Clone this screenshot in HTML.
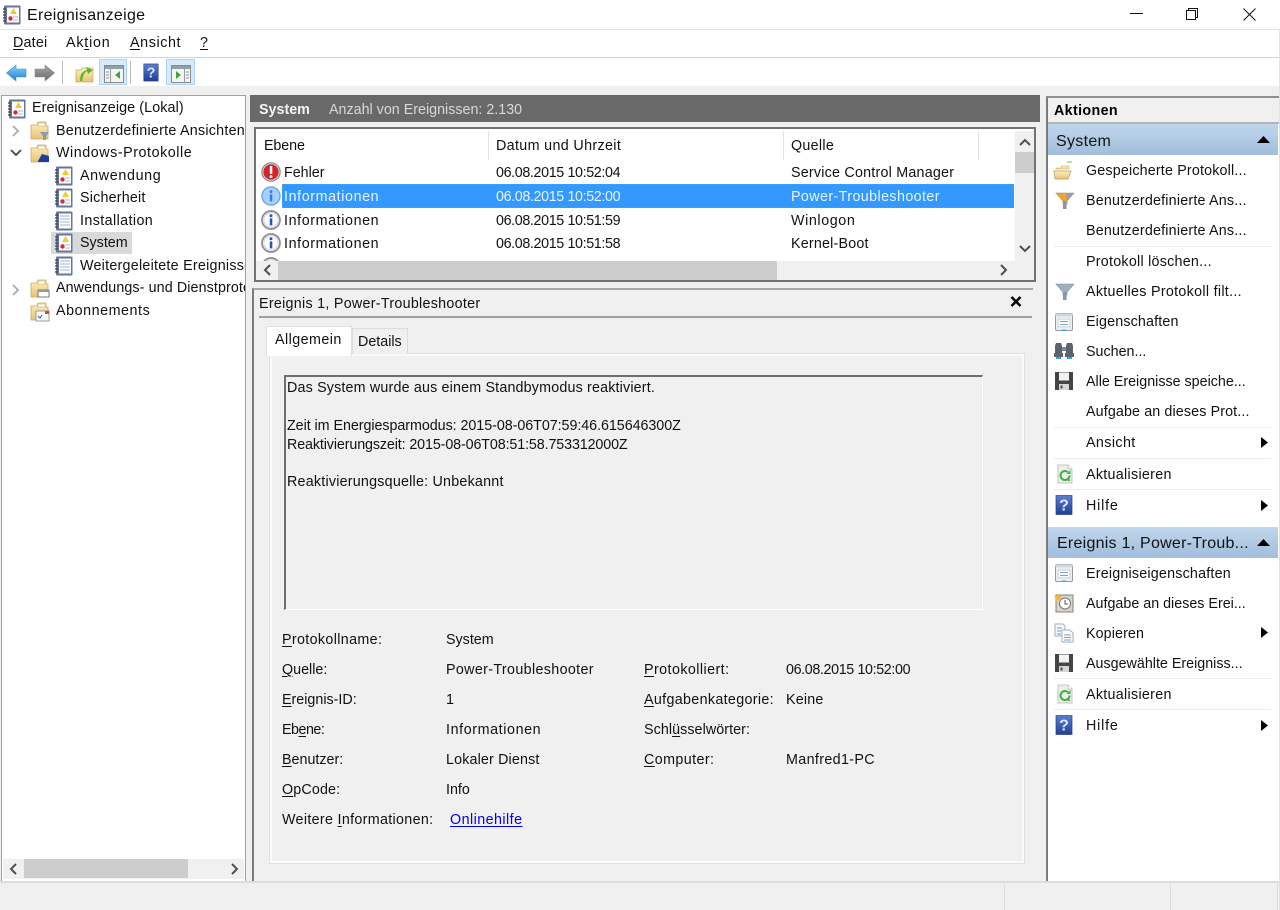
<!DOCTYPE html>
<html lang="de"><head><meta charset="utf-8"><title>Ereignisanzeige</title>
<style>
html,body{margin:0;padding:0;width:1280px;height:910px;overflow:hidden;background:#f0f0f0}
body{position:relative;font-family:"Liberation Sans",sans-serif;font-size:14.3px;color:#111}
.b{position:absolute}
.t{position:absolute;white-space:nowrap;line-height:20px;height:20px;margin-top:1px}
.d{letter-spacing:-.37px}
svg.i{position:absolute;overflow:visible}
u{text-decoration:underline;text-underline-offset:2px}
</style></head><body>
<svg width="0" height="0" style="position:absolute"><defs>
<linearGradient id="gb" x1="0" y1="0" x2="0" y2="1"><stop offset="0" stop-color="#8fd0fa"/><stop offset="1" stop-color="#1c7fd0"/></linearGradient>
<linearGradient id="gg" x1="0" y1="0" x2="0" y2="1"><stop offset="0" stop-color="#a8a8a8"/><stop offset="1" stop-color="#6a6a6a"/></linearGradient>
<linearGradient id="gf" x1="0" y1="0" x2="0" y2="1"><stop offset="0" stop-color="#fdf0c0"/><stop offset="1" stop-color="#e8c274"/></linearGradient>
<linearGradient id="gq" x1="0" y1="0" x2="0" y2="1"><stop offset="0" stop-color="#5a7fd0"/><stop offset="1" stop-color="#1f3f98"/></linearGradient>
<symbol id="log" viewBox="0 0 18 20"><rect x="1" y="0.500" width="16.500" height="19" fill="#64769a" rx="1"/><rect x="4" y="2.500" width="12" height="15" fill="#fff"/><path d="M0 4h3M0 7h3M0 10h3M0 13h3M0 16h3" stroke="#444" stroke-width="1.200"/><path d="M10.500 3l3.500 6h-7z" fill="#f5c92c"/><circle cx="7.500" cy="13.500" r="2.200" fill="#cf2d36"/><path d="M10 12h5M10 15h5" stroke="#a8b8d0"/></symbol>
<symbol id="logp" viewBox="0 0 18 20"><rect x="1" y="0.500" width="16.500" height="19" fill="#64769a" rx="1"/><rect x="4" y="2.500" width="12" height="15" fill="#fff"/><path d="M0 4h3M0 7h3M0 10h3M0 13h3M0 16h3" stroke="#444" stroke-width="1.200"/><path d="M5 5h10M5 8h10M5 11h10M5 14h10" stroke="#9cb4d8"/></symbol>
<symbol id="fold" viewBox="0 0 20 20"><path d="M1 5h6l1-3h8v4h2v13H1z" fill="url(#gf)" stroke="#cda860" stroke-width=".8"/><rect x="8" y="3" width="7" height="3" fill="#fff" stroke="#c8a860" stroke-width=".5"/></symbol>
<symbol id="info" viewBox="0 0 20 20"><circle cx="10" cy="10" r="9" fill="#fff" stroke="#8c8c8c" stroke-width="1.700"/><circle cx="10" cy="10" r="7.200" fill="#fbfbfd" stroke="#d0d0d8"/><rect x="8.800" y="8.400" width="2.500" height="7" fill="#2456b8"/><circle cx="10" cy="5.800" r="1.500" fill="#2456b8"/></symbol>
<symbol id="err" viewBox="0 0 20 20"><circle cx="10" cy="10" r="9.200" fill="#d5d0d0" stroke="#8c8c8c" stroke-width="1.200"/><circle cx="10" cy="10" r="7.600" fill="#d5222c"/><rect x="8.800" y="4" width="2.500" height="8" fill="#fff"/><circle cx="10" cy="14.600" r="1.500" fill="#fff"/></symbol>
<symbol id="props" viewBox="0 0 20 20"><rect x="1.500" y="1.500" width="17" height="17" rx="1.500" fill="#eef1f4" stroke="#9a9a9a"/><rect x="1.500" y="1.500" width="17" height="3" fill="#d4d8dc"/><rect x="4" y="7" width="12" height="8" fill="#fff" stroke="#b8c0c8" stroke-width=".7"/><path d="M6 9.500h8M6 12.500h8" stroke="#7aa8d0"/><rect x="8" y="17.500" width="4" height="1.500" fill="#3ab0e0"/></symbol>
<symbol id="save" viewBox="0 0 20 20"><path d="M1 1h18v18H1z" fill="#444"/><rect x="5" y="1.500" width="10" height="8" fill="#f2f2f2"/><rect x="5" y="13" width="10" height="6" fill="#d6d6d6"/><rect x="6.500" y="14.500" width="2" height="3" fill="#444"/></symbol>
<symbol id="refr" viewBox="0 0 20 20"><path d="M3 1h10l4 4v14H3z" fill="#eeeeee" stroke="#c4c4c4"/><path d="M13 1v4h4" fill="#fff" stroke="#c4c4c4"/><path d="M14.500 11.500a4.500 4.500 0 1 1-1.600-3.400" fill="none" stroke="#3cb43c" stroke-width="2"/><path d="M15.500 6v4h-4z" fill="#3cb43c"/><path d="M11 15l4 1.500" stroke="#3cb43c" stroke-width="1.500"/></symbol>
<symbol id="help" viewBox="0 0 20 20"><rect x="2" y="0.500" width="16" height="19" fill="url(#gq)" stroke="#2a3f80" stroke-width=".7"/><text x="10" y="15.500" text-anchor="middle" font-family="Liberation Sans" font-weight="bold" font-size="16" fill="#dbe6ff">?</text></symbol>
<symbol id="filt" viewBox="0 0 20 20"><path d="M1 2h18l-7 8v3H8v-3z" fill="#9eb0c0" stroke="#7f8f9f" stroke-width=".6"/><rect x="8" y="10" width="3.600" height="8" fill="#8895a3"/></symbol>
<symbol id="filty" viewBox="0 0 20 20"><path d="M1 2h18l-7 8v3H8v-3z" fill="#f5a623" stroke="#a09070" stroke-width=".6"/><path d="M11 2h8l-7 8z" fill="#8fa0b0"/><rect x="8" y="10" width="3.600" height="8" fill="#8895a3"/></symbol>
<symbol id="open" viewBox="0 0 20 20"><path d="M3 7h5l1-2h7v3H3z" fill="#f5e3a8" stroke="#c8a860" stroke-width=".6"/><path d="M1 10h14l3 0-3 8H2z" fill="url(#gf)" stroke="#b8985a" stroke-width=".7"/><path d="M14 1h5" stroke="#55d055"/></symbol>
<symbol id="bino" viewBox="0 0 22 20"><path d="M2 5l1-3h5l1 3v8H2zM13 5l1-3h5l1 3v8h-7z" fill="#59626e"/><rect x="9" y="6" width="4" height="4" fill="#7d8692"/><rect x="1" y="12" width="9" height="4" fill="#5b6672"/><rect x="12" y="12" width="9" height="4" fill="#5b6672"/><path d="M3 17h5M14 17h5" stroke="#34a0e6" stroke-width="2"/></symbol>
<symbol id="clock" viewBox="0 0 20 20"><rect x="2" y="2" width="17" height="17" fill="#d8d2c8" stroke="#8a8276"/><circle cx="11" cy="10.500" r="5.500" fill="#fff" stroke="#777"/><path d="M11 7v4h3" fill="none" stroke="#555"/><path d="M4 0.500l1.300 2.600 2.700.4-2 2 .5 2.800L4 6.600 1.500 8l.5-2.800-2-2 2.700-.4z" fill="#f5b830"/></symbol>
<symbol id="copy" viewBox="0 0 20 20"><path d="M1 1h8l2 2v10H1z" fill="#f6f8fb" stroke="#a6aeb8"/><path d="M8 7h8l3 3v9H8z" fill="#fff" stroke="#a6aeb8"/><path d="M3 5h5M3 8h4M3 11h4M10 12h7M10 14.500h7M10 17h7" stroke="#6fa0d0"/></symbol>
<symbol id="pane" viewBox="0 0 20 18"><rect x="0.500" y="0.500" width="19" height="17" fill="#f4f4f4" stroke="#8a8a8a"/><rect x="1" y="1" width="18" height="3" fill="#90a0a8"/><path d="M6.500 4v13" stroke="#9a9a9a"/><path d="M2 7h3M2 10h3M2 13h3" stroke="#7a9ab8"/></symbol>
</defs></svg>

<!-- title bar -->
<div class="b" style="left:0;top:0;width:1280px;height:29px;background:#fff"></div>
<svg class="i" style="left:3px;top:5px" width="18" height="20"><use href="#log"/></svg>
<div class="t" style="left:27px;top:5px;font-size:16px;letter-spacing:.3px">Ereignisanzeige</div>
<svg class="i" style="left:1130px;top:13px" width="14" height="1"><rect width="13" height="1" fill="#111"/></svg>
<svg class="i" style="left:1186px;top:8px" width="12" height="12"><path d="M.5 2.500h9v9h-9zM2.500 2.500v-2h9v9h-2" fill="none" stroke="#111"/></svg>
<svg class="i" style="left:1243px;top:8px" width="13" height="13"><path d="M.5.500l12 12M12.500.500l-12 12" stroke="#111" fill="none"/></svg>
<!-- menu -->
<div class="b" style="left:0;top:29px;width:1280px;background:#fff;border-top:1px solid #e2e2e2;border-bottom:1px solid #d4d4d4;box-sizing:border-box;height:29px"></div>
<div class="t" style="left:13px;top:32px;letter-spacing:.2px"><u>D</u>atei</div>
<div class="t" style="left:66px;top:32px;letter-spacing:.8px">Ak<u>t</u>ion</div>
<div class="t" style="left:130px;top:32px;letter-spacing:.6px"><u>A</u>nsicht</div>
<div class="t" style="left:200px;top:32px"><u>?</u></div>
<!-- toolbar -->
<div class="b" style="left:0;top:58px;width:1280px;height:28px;background:#fff"></div>
<svg class="i" style="left:6px;top:64px" width="21" height="18"><path d="M.5 9L10 1v4h10v8H10v4z" fill="url(#gb)" stroke="#3a90d8" stroke-width=".6"/></svg>
<svg class="i" style="left:34px;top:64px" width="21" height="18"><path d="M20.500 9L11 1v4H1v8h10v4z" fill="url(#gg)" stroke="#888" stroke-width=".6"/></svg>
<div class="b" style="left:62px;top:61px;width:1px;height:23px;background:#b8b8b8"></div>
<svg class="i" style="left:75px;top:64px" width="19" height="19"><path d="M1 6h5l1-2h11v14H1z" fill="url(#gf)" stroke="#c8a860" stroke-width=".7"/><path d="M5 17c0-6 2-10 7-11l-1-3 7 3-5 4-1-3c-2 1-4 4-5 10z" fill="#58b830"/></svg>
<div class="b" style="left:99px;top:59px;width:28px;height:26px;background:#d6eafb;border:1px solid #a8d4f8;box-sizing:border-box"></div>
<svg class="i" style="left:104px;top:65px" width="20" height="18"><use href="#pane"/><path d="M16 6v8l-5-4z" fill="#3ca83c"/></svg>
<div class="b" style="left:130px;top:61px;width:1px;height:23px;background:#b8b8b8"></div>
<svg class="i" style="left:142px;top:62px" width="18" height="21"><use href="#help" width="18" height="21"/></svg>
<div class="b" style="left:166px;top:59px;width:29px;height:26px;background:#d6eafb;border:1px solid #a8d4f8;box-sizing:border-box"></div>
<svg class="i" style="left:171px;top:65px" width="20" height="18"><rect x=".5" y=".5" width="19" height="17" fill="#f4f4f4" stroke="#8a8a8a"/><rect x="1" y="1" width="18" height="3" fill="#90a0a8"/><path d="M13.500 4v13" stroke="#9a9a9a"/><path d="M15 7h3M15 10h3M15 13h3" stroke="#7a9ab8"/><path d="M5 6v8l5-4z" fill="#3ca83c"/></svg>

<!-- left tree -->
<div class="b" style="left:1px;top:95px;width:245px;height:787px;background:#fff;border:1px solid #a0a0a0;box-sizing:border-box;overflow:hidden">
<div style="position:absolute;left:-2px;top:-96px;width:1280px;height:910px">
<svg class="i" style="left:8px;top:99px" width="18" height="20"><use href="#log"/></svg>
<div class="t" style="left:32px;top:97px;letter-spacing:.1px">Ereignisanzeige (Lokal)</div>
<svg class="i" style="left:11px;top:125px" width="8" height="12"><path d="M2 1l5 5-5 5" fill="none" stroke="#aaa" stroke-width="1.800"/></svg>
<svg class="i" style="left:30px;top:120px" width="20" height="20"><use href="#fold"/><path d="M10 12h9l-3 4v4h-3v-4z" fill="#8c9cac"/></svg>
<div class="t" style="left:56px;top:120px;letter-spacing:.25px">Benutzerdefinierte Ansichten</div>
<svg class="i" style="left:10px;top:149px" width="12" height="8"><path d="M1 1l5 5 5-5" fill="none" stroke="#444" stroke-width="1.800"/></svg>
<svg class="i" style="left:30px;top:143px" width="20" height="20"><use href="#fold"/><path d="M8 18l4-7 7 2v6H8z" fill="#1f3f9c"/></svg>
<div class="t" style="left:56px;top:142px;letter-spacing:.55px">Windows-Protokolle</div>
<svg class="i" style="left:55px;top:166px" width="18" height="20"><use href="#log"/></svg>
<div class="t" style="left:80px;top:165px;letter-spacing:.65px">Anwendung</div>
<svg class="i" style="left:55px;top:188px" width="18" height="20"><use href="#log"/></svg>
<div class="t" style="left:80px;top:187px;letter-spacing:.2px">Sicherheit</div>
<svg class="i" style="left:55px;top:211px" width="18" height="20"><use href="#logp"/></svg>
<div class="t" style="left:80px;top:210px;letter-spacing:.4px">Installation</div>
<div class="b" style="left:51px;top:232px;width:81px;height:22px;background:#d9d9d9"></div>
<svg class="i" style="left:55px;top:233px" width="18" height="20"><use href="#log"/></svg>
<div class="t" style="left:80px;top:232px">System</div>
<svg class="i" style="left:55px;top:256px" width="18" height="20"><use href="#logp"/></svg>
<div class="t" style="left:80px;top:255px;letter-spacing:.25px">Weitergeleitete Ereignisse</div>
<svg class="i" style="left:11px;top:284px" width="8" height="12"><path d="M2 1l5 5-5 5" fill="none" stroke="#aaa" stroke-width="1.800"/></svg>
<svg class="i" style="left:30px;top:278px" width="20" height="20"><use href="#fold"/><rect x="8" y="12" width="11" height="7" fill="#fff" stroke="#777"/><rect x="8" y="12" width="11" height="2" fill="#999"/></svg>
<div class="t" style="left:56px;top:277px;letter-spacing:.1px">Anwendungs- und Dienstprotokolle</div>
<svg class="i" style="left:30px;top:301px" width="20" height="20"><use href="#fold"/><rect x="6" y="10" width="13" height="10" fill="#fff" stroke="#999"/><rect x="15" y="10" width="4" height="3" fill="#e04040"/><path d="M8 15l2 2 2-3" fill="none" stroke="#3050b0"/></svg>
<div class="t" style="left:56px;top:300px;letter-spacing:.55px">Abonnements</div>
</div>
<div class="b" style="left:1px;top:763px;width:241px;height:20px;background:#f0f0f0"></div>
<div class="b" style="left:22px;top:763px;width:164px;height:19px;background:#cdcdcd"></div>
<svg class="i" style="left:7px;top:767px" width="9" height="12"><path d="M7 1L2 6l5 5" fill="none" stroke="#505050" stroke-width="2"/></svg>
<svg class="i" style="left:228px;top:767px" width="9" height="12"><path d="M2 1l5 5-5 5" fill="none" stroke="#505050" stroke-width="2"/></svg>
</div>

<!-- centre header -->
<div class="b" style="left:250px;top:95px;width:790px;height:27px;background:#696969"></div>
<div class="t" style="left:259px;top:99px;color:#f4f4f4;font-weight:bold">System</div>
<div class="t" style="left:329px;top:99px;color:#d8d8d8">Anzahl von Ereignissen: 2.130</div>

<!-- list frame -->
<div class="b" style="left:254px;top:127px;width:782px;height:155px;background:#fff;border:2px solid #727272;box-sizing:border-box"></div>
<div class="b" style="left:488px;top:131px;width:1px;height:29px;background:#e4e4e4"></div>
<div class="b" style="left:783px;top:131px;width:1px;height:29px;background:#e4e4e4"></div>
<div class="b" style="left:978px;top:131px;width:1px;height:29px;background:#e4e4e4"></div>
<div class="t" style="left:264px;top:135px;letter-spacing:-.1px">Ebene</div>
<div class="t" style="left:496px;top:135px;letter-spacing:.35px">Datum und Uhrzeit</div>
<div class="t" style="left:791px;top:135px;letter-spacing:.3px">Quelle</div>
<svg class="i" style="left:261px;top:162px" width="20" height="20"><use href="#err"/></svg>
<div class="t" style="left:284px;top:162px">Fehler</div>
<div class="t d" style="left:496px;top:162px">06.08.2015 10:52:04</div>
<div class="t" style="left:791px;top:162px;letter-spacing:.22px">Service Control Manager</div>
<div class="b" style="left:282px;top:184px;width:732px;height:24px;background:#3399ff;outline:1px dotted #d08030;outline-offset:-1px"></div>
<svg class="i" style="left:261px;top:186px" width="20" height="20"><circle cx="10" cy="10" r="9" fill="#a8d0fa" stroke="#6aa8e8" stroke-width="1.500"/><rect x="8.800" y="8.400" width="2.500" height="7" fill="#2f7fd8"/><circle cx="10" cy="5.800" r="1.500" fill="#2f7fd8"/></svg>
<div class="t" style="left:284px;top:186px;color:#e8f3ff;letter-spacing:.6px">Informationen</div>
<div class="t d" style="left:496px;top:186px;color:#e8f3ff">06.08.2015 10:52:00</div>
<div class="t" style="left:791px;top:186px;color:#e8f3ff;letter-spacing:.4px">Power-Troubleshooter</div>
<svg class="i" style="left:261px;top:210px" width="20" height="20"><use href="#info"/></svg>
<div class="t" style="left:284px;top:210px;letter-spacing:.6px">Informationen</div>
<div class="t d" style="left:496px;top:210px">06.08.2015 10:51:59</div>
<div class="t" style="left:791px;top:210px;letter-spacing:.6px">Winlogon</div>
<svg class="i" style="left:261px;top:233px" width="20" height="20"><use href="#info"/></svg>
<div class="t" style="left:284px;top:233px;letter-spacing:.6px">Informationen</div>
<div class="t d" style="left:496px;top:233px">06.08.2015 10:51:58</div>
<div class="t" style="left:791px;top:233px;letter-spacing:.2px">Kernel-Boot</div>
<svg class="i" style="left:261px;top:257px;overflow:hidden" width="20" height="4"><use href="#info" width="20" height="20"/></svg>
<!-- list scrollbars -->
<div class="b" style="left:256px;top:261px;width:778px;height:19px;background:#f0f0f0"></div>
<div class="b" style="left:278px;top:261px;width:499px;height:19px;background:#cdcdcd"></div>
<svg class="i" style="left:263px;top:264px" width="9" height="12"><path d="M7 1L2 6l5 5" fill="none" stroke="#505050" stroke-width="2"/></svg>
<svg class="i" style="left:999px;top:264px" width="9" height="12"><path d="M2 1l5 5-5 5" fill="none" stroke="#505050" stroke-width="2"/></svg>
<div class="b" style="left:1015px;top:131px;width:19px;height:130px;background:#f0f0f0"></div>
<div class="b" style="left:1015px;top:152px;width:19px;height:21px;background:#cdcdcd"></div>
<svg class="i" style="left:1019px;top:138px" width="12" height="9"><path d="M1 7l5-5 5 5" fill="none" stroke="#505050" stroke-width="2"/></svg>
<svg class="i" style="left:1019px;top:244px" width="12" height="9"><path d="M1 2l5 5 5-5" fill="none" stroke="#505050" stroke-width="2"/></svg>

<!-- detail panel -->
<div class="b" style="left:252px;top:288px;width:781px;height:593px;border-top:2px solid #a8a8a8;border-left:2px solid #7c7c7c;box-sizing:border-box"></div>
<div class="t" style="left:259px;top:293px;letter-spacing:.28px">Ereignis 1, Power-Troubleshooter</div>
<svg class="i" style="left:1010px;top:296px" width="13" height="12"><path d="M1.500 1l9 9M10.500 1l-9 9" stroke="#000" stroke-width="2.400" fill="none"/></svg>
<div class="b" style="left:259px;top:316px;width:773px;height:2px;background:#a0a0a0"></div>
<div class="b" style="left:270px;top:354px;width:754px;height:509px;border:2px solid #fafafa;outline:1px solid #e0e0e0;box-sizing:border-box;background:#f0f0f0"></div>
<div class="b" style="left:352px;top:328px;width:56px;height:26px;background:#f0f0f0;border:1px solid #dcdcdc;border-bottom:none;box-sizing:border-box"></div>
<div class="b" style="left:266px;top:326px;width:86px;height:30px;background:#fff;border:1px solid #e0e0e0;border-bottom:none;box-sizing:border-box"></div>
<div class="t" style="left:275px;top:329px;letter-spacing:.45px">Allgemein</div>
<div class="t" style="left:358px;top:331px">Details</div>
<div class="b" style="left:284px;top:375px;width:699px;height:235px;background:#f0f0f0;border-top:2px solid #6e6e6e;border-left:2px solid #6e6e6e;border-right:1px solid #fff;border-bottom:1px solid #fff;box-sizing:border-box"></div>
<div class="t" style="left:287px;top:377px;letter-spacing:.17px">Das System wurde aus einem Standbymodus reaktiviert.</div>
<div class="t" style="left:287px;top:415px;letter-spacing:-.05px">Zeit im Energiesparmodus: 2015-08-06T07:59:46.615646300Z</div>
<div class="t" style="left:287px;top:434px;letter-spacing:-.12px">Reaktivierungszeit: 2015-08-06T08:51:58.753312000Z</div>
<div class="t" style="left:287px;top:471px;letter-spacing:.22px">Reaktivierungsquelle: Unbekannt</div>

<div class="t" style="left:282px;top:629px;letter-spacing:.35px"><u>P</u>rotokollname:</div>
<div class="t" style="left:446px;top:629px">System</div>
<div class="t" style="left:282px;top:659px"><u>Q</u>uelle:</div>
<div class="t" style="left:446px;top:659px;letter-spacing:.35px">Power-Troubleshooter</div>
<div class="t" style="left:644px;top:659px;letter-spacing:.43px"><u>P</u>rotokolliert:</div>
<div class="t d" style="left:786px;top:659px">06.08.2015 10:52:00</div>
<div class="t" style="left:282px;top:689px"><u>E</u>reignis-ID:</div>
<div class="t" style="left:446px;top:689px">1</div>
<div class="t" style="left:644px;top:689px;letter-spacing:.33px"><u>A</u>ufgabenkategorie:</div>
<div class="t" style="left:786px;top:689px;letter-spacing:.2px">Keine</div>
<div class="t" style="left:282px;top:719px;letter-spacing:-.5px">Eb<u>e</u>ne:</div>
<div class="t" style="left:446px;top:719px;letter-spacing:.6px">Informationen</div>
<div class="t" style="left:644px;top:719px;letter-spacing:.07px">Schl<u>ü</u>sselwörter:</div>
<div class="t" style="left:282px;top:749px"><u>B</u>enutzer:</div>
<div class="t" style="left:446px;top:749px;letter-spacing:.15px">Lokaler Dienst</div>
<div class="t" style="left:644px;top:749px;letter-spacing:.4px"><u>C</u>omputer:</div>
<div class="t" style="left:786px;top:749px;letter-spacing:.36px">Manfred1-PC</div>
<div class="t" style="left:282px;top:779px;letter-spacing:.15px"><u>O</u>pCode:</div>
<div class="t" style="left:446px;top:779px">Info</div>
<div class="t" style="left:282px;top:809px;letter-spacing:.32px">Weitere <u>I</u>nformationen:</div>
<div class="t" style="left:450px;top:809px;color:#0000ee;letter-spacing:.45px"><u>Onlinehilfe</u></div>

<!-- right panel -->
<div class="b" style="left:1046px;top:96px;width:234px;height:785px;background:#fff;border-left:2px solid #7c7c7c;border-top:2px solid #909090;box-sizing:border-box"></div>
<div class="b" style="left:1048px;top:98px;width:232px;height:24px;background:#f0f0f0;border-bottom:2px solid #b4b4b4"></div>
<div class="t" style="left:1054px;top:100px;font-weight:bold;color:#000;letter-spacing:.35px">Aktionen</div>
<div class="b" style="left:1048px;top:124px;width:230px;height:31px;background:linear-gradient(#c0d6ec,#a2bedc)"></div>
<div class="t" style="left:1056px;top:131px;font-size:16px;letter-spacing:.3px">System</div>
<svg class="i" style="left:1257px;top:136px" width="13" height="7"><path d="M6.500 0L13 7H0z" fill="#000"/></svg>

<svg class="i" style="left:1053px;top:161px" width="20" height="20"><use href="#open"/></svg>
<div class="t" style="left:1086px;top:160px;letter-spacing:.17px">Gespeicherte Protokoll...</div>
<svg class="i" style="left:1055px;top:191px" width="20" height="20"><use href="#filty"/></svg>
<div class="t" style="left:1086px;top:190px;letter-spacing:.2px">Benutzerdefinierte Ans...</div>
<div class="t" style="left:1086px;top:220px;letter-spacing:.2px">Benutzerdefinierte Ans...</div>
<div class="b" style="left:1054px;top:246px;width:217px;height:1px;background:#ececec"></div>
<div class="t" style="left:1086px;top:251px;letter-spacing:.25px">Protokoll löschen...</div>
<svg class="i" style="left:1055px;top:282px" width="20" height="20"><use href="#filt"/></svg>
<div class="t" style="left:1086px;top:281px;letter-spacing:.3px">Aktuelles Protokoll filt...</div>
<svg class="i" style="left:1054px;top:312px" width="20" height="20"><use href="#props"/></svg>
<div class="t" style="left:1086px;top:311px;letter-spacing:.15px">Eigenschaften</div>
<svg class="i" style="left:1053px;top:341px" width="22" height="20"><use href="#bino"/></svg>
<div class="t" style="left:1086px;top:341px">Suchen...</div>
<svg class="i" style="left:1054px;top:371px" width="20" height="20"><use href="#save"/></svg>
<div class="t" style="left:1086px;top:371px">Alle Ereignisse speiche...</div>
<div class="t" style="left:1086px;top:401px;letter-spacing:.12px">Aufgabe an dieses Prot...</div>
<div class="b" style="left:1054px;top:427px;width:217px;height:1px;background:#ececec"></div>
<div class="t" style="left:1086px;top:432px;letter-spacing:.4px">Ansicht</div>
<svg class="i" style="left:1261px;top:437px" width="7" height="11"><path d="M0 0l7 5.500L0 11z" fill="#000"/></svg>
<div class="b" style="left:1054px;top:458px;width:217px;height:1px;background:#ececec"></div>
<svg class="i" style="left:1055px;top:464px" width="20" height="20"><use href="#refr"/></svg>
<div class="t" style="left:1086px;top:464px;letter-spacing:.3px">Aktualisieren</div>
<div class="b" style="left:1054px;top:489px;width:217px;height:1px;background:#ececec"></div>
<svg class="i" style="left:1054px;top:495px" width="20" height="20"><use href="#help"/></svg>
<div class="t" style="left:1086px;top:495px;letter-spacing:.8px">Hilfe</div>
<svg class="i" style="left:1261px;top:500px" width="7" height="11"><path d="M0 0l7 5.500L0 11z" fill="#000"/></svg>

<div class="b" style="left:1048px;top:527px;width:230px;height:31px;background:linear-gradient(#c0d6ec,#a2bedc)"></div>
<div class="t" style="left:1057px;top:533px;font-size:16px;letter-spacing:.25px">Ereignis 1, Power-Troub...</div>
<svg class="i" style="left:1257px;top:539px" width="13" height="7"><path d="M6.500 0L13 7H0z" fill="#000"/></svg>
<svg class="i" style="left:1054px;top:563px" width="20" height="20"><use href="#props"/></svg>
<div class="t" style="left:1086px;top:563px;letter-spacing:.2px">Ereigniseigenschaften</div>
<svg class="i" style="left:1054px;top:593px" width="20" height="20"><use href="#clock"/></svg>
<div class="t" style="left:1086px;top:593px">Aufgabe an dieses Erei...</div>
<svg class="i" style="left:1054px;top:623px" width="20" height="20"><use href="#copy"/></svg>
<div class="t" style="left:1086px;top:623px;letter-spacing:.1px">Kopieren</div>
<svg class="i" style="left:1261px;top:627px" width="7" height="11"><path d="M0 0l7 5.500L0 11z" fill="#000"/></svg>
<svg class="i" style="left:1054px;top:653px" width="20" height="20"><use href="#save"/></svg>
<div class="t" style="left:1086px;top:653px">Ausgewählte Ereigniss...</div>
<div class="b" style="left:1054px;top:678px;width:217px;height:1px;background:#ececec"></div>
<svg class="i" style="left:1055px;top:684px" width="20" height="20"><use href="#refr"/></svg>
<div class="t" style="left:1086px;top:684px;letter-spacing:.3px">Aktualisieren</div>
<div class="b" style="left:1054px;top:709px;width:217px;height:1px;background:#ececec"></div>
<svg class="i" style="left:1054px;top:715px" width="20" height="20"><use href="#help"/></svg>
<div class="t" style="left:1086px;top:715px;letter-spacing:.8px">Hilfe</div>
<svg class="i" style="left:1261px;top:720px" width="7" height="11"><path d="M0 0l7 5.500L0 11z" fill="#000"/></svg>

<!-- status bar -->
<div class="b" style="left:0;top:881px;width:1280px;height:29px;background:#f0f0f0;border-top:2px solid #dcdcdc;box-sizing:border-box"></div>
<div class="b" style="left:1004px;top:884px;width:1px;height:26px;background:#dcdcdc"></div>
<div class="b" style="left:1170px;top:884px;width:1px;height:26px;background:#dcdcdc"></div>
<div class="b" style="left:1277px;top:884px;width:1px;height:26px;background:#dcdcdc"></div>
<div class="b" style="left:1279px;top:29px;width:1px;height:881px;background:#e2e2e2"></div>
</body></html>
